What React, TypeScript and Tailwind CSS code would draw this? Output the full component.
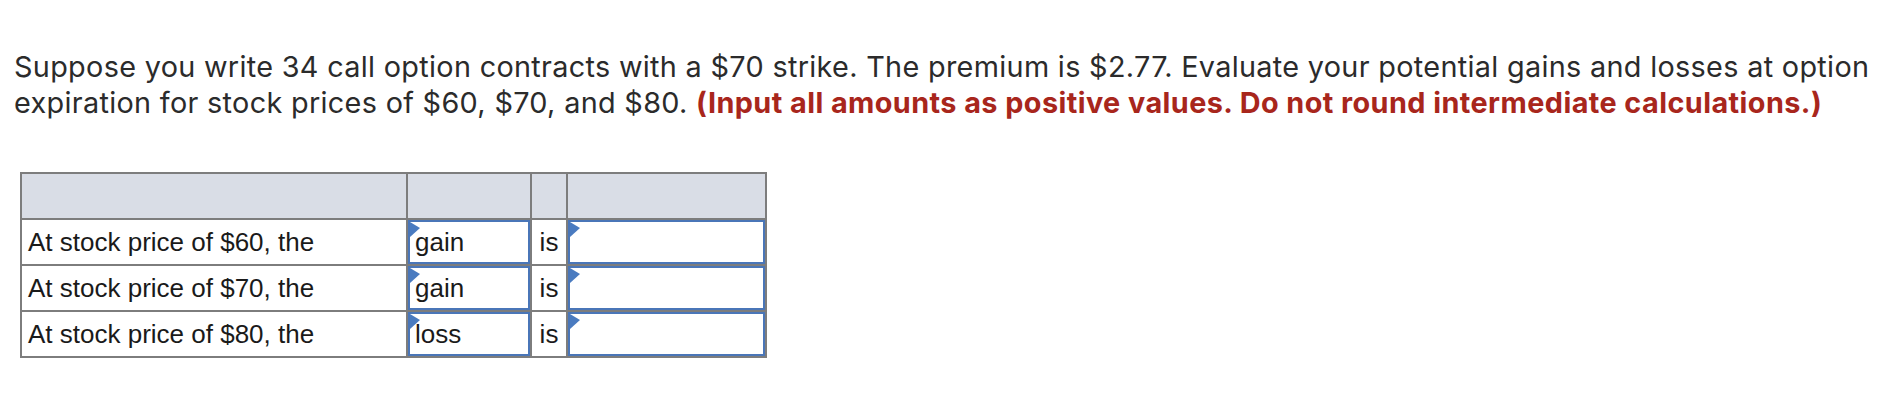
const rows = [
  { price: "$60", choice: "gain" },
  { price: "$70", choice: "gain" },
  { price: "$80", choice: "loss" },
];

function Marker() {
  return (
    <svg
      className="absolute left-0 top-0"
      width="10"
      height="15"
      viewBox="0 0 10 15"
    >
      <polygon points="0,0 10,6 0,15" fill="#4a7bc0" />
    </svg>
  );
}

function Field({ value }: { value?: string }) {
  return (
    <div className="relative flex h-full items-center border-2 border-[#4a76b8] bg-white px-[5px]">
      <Marker />
      {value ? <span>{value}</span> : null}
    </div>
  );
}

export default function App() {
  return (
    <div className="min-h-[416px] bg-white px-[14px] pt-[49px]">
      <p className="whitespace-nowrap font-['Inter',sans-serif] text-[28.8px] leading-[36px] tracking-[0.32px] text-[#2b2b2b]">
        Suppose you write 34 call option contracts with a $70 strike. The
        premium is $2.77. Evaluate your potential gains and losses at option
        <br />
        expiration for stock prices of $60, $70, and $80.{" "}
        <strong className="font-bold tracking-[0.44px] text-[#a8261c]">
          (Input all amounts as positive values. Do not round intermediate
          calculations.)
        </strong>
      </p>

      <div className="ml-[6px] mt-[51px] grid w-fit grid-cols-[384px_122px_34px_197px] auto-rows-[44px] gap-[2px] bg-[#7d7d7d] p-[2px] font-['Liberation_Sans',Arial,sans-serif] text-[26px] text-[#1a1a1a]">
        <div className="bg-[#d9dde6]" />
        <div className="bg-[#d9dde6]" />
        <div className="bg-[#d9dde6]" />
        <div className="bg-[#d9dde6]" />
        {rows.map((row) => (
          <div key={row.price} className="contents">
            <div className="flex items-center bg-white px-[6px]">
              At stock price of {row.price}, the
            </div>
            <Field value={row.choice} />
            <div className="flex items-center justify-center bg-white">is</div>
            <Field />
          </div>
        ))}
      </div>
    </div>
  );
}
